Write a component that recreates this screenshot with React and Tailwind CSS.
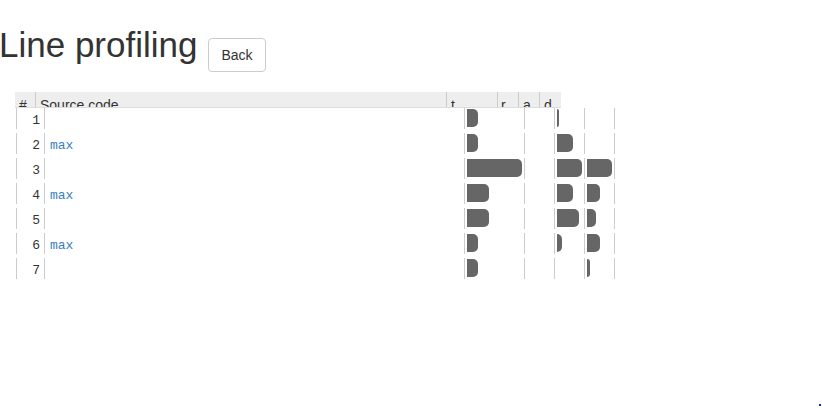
import React from "react";

const rows = [
  { n: 1, code: "", t: 11, r: 0, a: 2, d: 0 },
  { n: 2, code: "max", t: 11, r: 0, a: 16, d: 0 },
  { n: 3, code: "", t: 55, r: 0, a: 25, d: 25 },
  { n: 4, code: "max", t: 22, r: 0, a: 16, d: 13 },
  { n: 5, code: "", t: 22, r: 0, a: 22, d: 9 },
  { n: 6, code: "max", t: 11, r: 0, a: 5, d: 13 },
  { n: 7, code: "", t: 11, r: 0, a: 0, d: 3 },
];

const Bar = ({ width }) =>
  width > 0 ? (
    <div className="h-[18px] bg-[#666] rounded-r-[5px]" style={{ width }} />
  ) : null;

const App = () => {
  return (
    <div className="relative w-[822px] h-[408px] bg-white overflow-hidden font-['Liberation_Sans',Arial,sans-serif] text-[#333]">
      <div className="flex items-start">
        <h1 className="mt-[25px] ml-[-1px] text-[35px] leading-[40px] font-normal">
          Line profiling
        </h1>
        <button className="ml-[11px] mt-[38px] h-[34px] px-[12px] border border-[#ccc] rounded-[4px] bg-white text-[14px] leading-[20px] text-[#333]">
          Back
        </button>
      </div>

      <div className="ml-[15px] mt-[20px] flex w-[546px] h-[16px] bg-[#eee] border-b border-[#ddd] overflow-hidden text-[14px] leading-[20px]">
        <div className="w-[20px] pl-[4px] pt-[3px]">#</div>
        <div className="w-[411px] pl-[4px] pt-[3px] border-l border-[#ccc]">Source code</div>
        <div className="w-[51px] pl-[4px] pt-[3px] border-l border-[#ccc]">t</div>
        <div className="w-[21px] pl-[3px] pt-[3px] border-l border-[#ccc]">r</div>
        <div className="w-[21px] pl-[4px] pt-[3px] border-l border-[#ccc]">a</div>
        <div className="w-[22px] pl-[4px] pt-[3px] border-l border-[#ccc]">d</div>
      </div>

      <div className="ml-[16px] flex flex-col gap-[4px] font-['Liberation_Mono','Courier_New',monospace] text-[13px]">
        {rows.map((row) => (
          <div key={row.n} className="flex h-[21px]">
            <div className="w-[28px] border-l border-[#ccc] text-right pr-[4px] leading-[25px] text-[#333]">
              {row.n}
            </div>
            <div className="w-[420px] border-l border-[#ccc] pl-[5px] leading-[25px] text-[#3a7fc0]">
              {row.code}
            </div>
            <div className="w-[60px] border-l border-[#ccc] pl-[2px] pt-[1px]">
              <Bar width={row.t} />
            </div>
            <div className="w-[30px] border-l border-[#ccc] pl-[2px] pt-[1px]">
              <Bar width={row.r} />
            </div>
            <div className="w-[30px] border-l border-[#ccc] pl-[2px] pt-[1px]">
              <Bar width={row.a} />
            </div>
            <div className="w-[31px] border-l border-r border-[#ccc] pl-[2px] pt-[1px]">
              <Bar width={row.d} />
            </div>
          </div>
        ))}
      </div>

      <div className="absolute left-[819px] top-[404px] w-[2px] h-[2px] bg-[#1a1aff]" />
    </div>
  );
};

export default App;
